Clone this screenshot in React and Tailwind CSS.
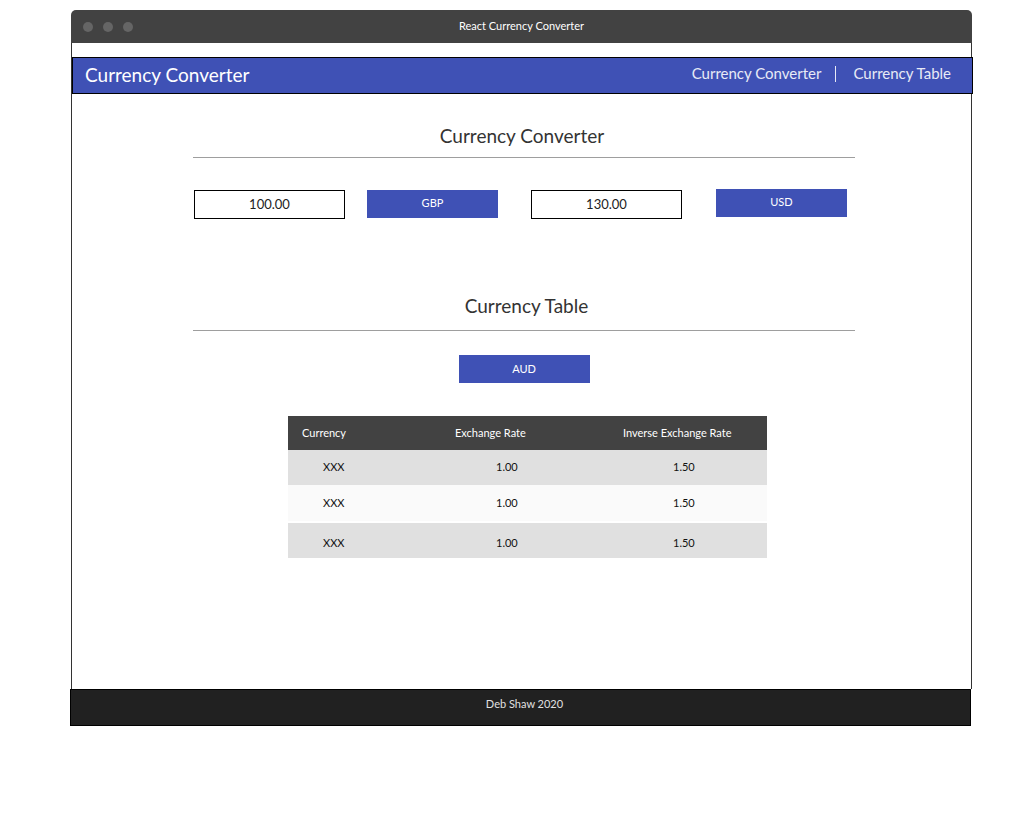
import React, { useState } from "react";

const rows = [
  { code: "XXX", rate: "1.00", inverse: "1.50", bg: "bg-[#e0e0e0]" },
  { code: "XXX", rate: "1.00", inverse: "1.50", bg: "bg-[#fafafa]" },
  { code: "XXX", rate: "1.00", inverse: "1.50", bg: "bg-[#e0e0e0]" },
];

function App() {
  const [amount, setAmount] = useState("100.00");
  const [converted, setConverted] = useState("130.00");

  return (
    <div className="min-h-screen bg-white pt-[10px] pl-[71px] font-['Lato',sans-serif]">
      <div className="w-[901px]">
        {/* Window title bar */}
        <div className="relative flex h-[33px] items-center rounded-t-[5px] bg-[#424242]">
          <div className="flex gap-[10px] pl-[12px]">
            <span className="h-[10px] w-[10px] rounded-full bg-[#656565]" />
            <span className="h-[10px] w-[10px] rounded-full bg-[#656565]" />
            <span className="h-[10px] w-[10px] rounded-full bg-[#656565]" />
          </div>
          <span className="absolute left-0 right-0 text-center text-[11px] text-white">
            React Currency Converter
          </span>
        </div>

        {/* Window body */}
        <div className="flex h-[646px] flex-col border-l border-r border-[#333] pt-[14px]">
          <nav className="flex h-[37px] w-[901px] items-center justify-between border border-black bg-[#3f51b5] pl-[12px] pr-[21px] text-white">
            <span className="text-[19px]">Currency Converter</span>
            <div className="-mt-[4px] flex items-center text-[15px] text-[#e8eaf6]">
              <span>Currency Converter</span>
              <span className="ml-[14px] mr-[17px] h-[16px] w-px bg-[#e8eaf6]" />
              <span>Currency Table</span>
            </div>
          </nav>

          {/* Converter */}
          <section className="ml-[121px] mt-[28px] w-[662px]">
            <h2 className="pr-[4px] text-center text-[19px] text-[#333]">Currency Converter</h2>
            <hr className="mt-[6px] border-t border-[#9e9e9e]" />
            <div className="ml-px mt-[32px] flex items-start">
              <input
                className="h-[29px] w-[151px] border border-black text-center text-[13px] text-[#222] outline-none"
                value={amount}
                onChange={(e) => setAmount(e.target.value)}
              />
              <button className="ml-[22px] h-[28px] w-[131px] bg-[#3f51b5] text-[11px] text-white">GBP</button>
              <input
                className="ml-[33px] h-[29px] w-[151px] border border-black text-center text-[13px] text-[#222] outline-none"
                value={converted}
                onChange={(e) => setConverted(e.target.value)}
              />
              <button className="-mt-px ml-[34px] h-[28px] w-[131px] bg-[#3f51b5] text-[11px] text-white">USD</button>
            </div>
          </section>

          {/* Table */}
          <section className="ml-[121px] mt-[73px] w-[662px]">
            <h2 className="pl-[5px] text-center text-[19px] text-[#333]">Currency Table</h2>
            <hr className="mt-[10px] border-t border-[#9e9e9e]" />
            <div className="mt-[24px] flex justify-center">
              <button className="h-[28px] w-[131px] bg-[#3f51b5] text-[11px] text-white">AUD</button>
            </div>

            <div className="ml-[95px] mt-[33px] w-[479px] text-[11px]">
              <div className="grid h-[34px] grid-cols-[152px_170px_1fr] items-center bg-[#424242] text-white">
                <span className="pl-[14px]">Currency</span>
                <span className="pl-[15px]">Exchange Rate</span>
                <span className="pl-[13px]">Inverse Exchange Rate</span>
              </div>
              {rows.map((row, i) => (
                <div
                  key={i}
                  className={`grid grid-cols-[152px_170px_1fr] items-center text-[#111] ${row.bg} ${
                    i === 0 ? "h-[35px]" : i === 1 ? "h-[36px]" : "mt-[2px] h-[35px] pt-[5px]"
                  }`}
                >
                  <span className="pl-[35px]">{row.code}</span>
                  <span className="pl-[56px]">{row.rate}</span>
                  <span className="pl-[63px]">{row.inverse}</span>
                </div>
              ))}
            </div>
          </section>
        </div>

        {/* Footer */}
        <footer className="-ml-px flex h-[37px] w-[901px] justify-center border border-black bg-[#212121] pl-[8px] pt-[6px] text-[11px] text-[#e0e0e0]">
          Deb Shaw 2020
        </footer>
      </div>
    </div>
  );
}

export default App;
